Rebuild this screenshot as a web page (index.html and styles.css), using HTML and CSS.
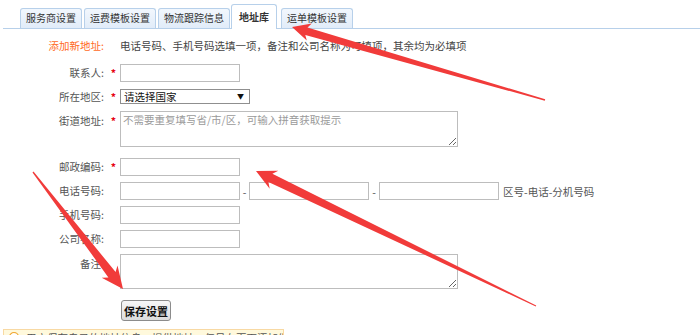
FILE: index.html
```html
<!DOCTYPE html>
<html lang="zh-CN">
<head>
<meta charset="utf-8">
<title>地址库</title>
<link rel="stylesheet" href="styles.css">
</head>
<body>
<div class="page">
  <div class="tabs">
    <div class="tab">服务商设置</div>
    <div class="tab">运费模板设置</div>
    <div class="tab">物流跟踪信息</div>
    <div class="tab active">地址库</div>
    <div class="tab">运单模板设置</div>
  </div>

  <div class="form">
    <div class="row head">
      <div class="label orange">添加新地址:</div>
      <div class="star"></div>
      <div class="desc">电话号码、手机号码选填一项，备注和公司名称为可填项，其余均为必填项</div>
    </div>
    <div class="row r-contact">
      <div class="label">联系人:</div><div class="star">*</div>
      <input class="inp" type="text">
    </div>
    <div class="row r-area">
      <div class="label">所在地区:</div><div class="star">*</div>
      <div class="select-wrap">
        <select class="sel"><option>请选择国家</option></select>
        <span class="sel-arrow">▼</span>
      </div>
    </div>
    <div class="row r-street top">
      <div class="label">街道地址:</div><div class="star">*</div>
      <textarea class="ta" placeholder="不需要重复填写省/市/区，可输入拼音获取提示"></textarea>
    </div>
    <div class="row r-zip">
      <div class="label">邮政编码:</div><div class="star">*</div>
      <input class="inp" type="text">
    </div>
    <div class="row r-std">
      <div class="label">电话号码:</div><div class="star"></div>
      <input class="inp" type="text"><span class="dash">-</span><input class="inp" type="text"><span class="dash d2">-</span><input class="inp" type="text"><span class="hint">区号-电话-分机号码</span>
    </div>
    <div class="row r-std">
      <div class="label">手机号码:</div><div class="star"></div>
      <input class="inp" type="text">
    </div>
    <div class="row r-std">
      <div class="label">公司名称:</div><div class="star"></div>
      <input class="inp" type="text">
    </div>
    <div class="row r-note top">
      <div class="label">备注:</div><div class="star"></div>
      <textarea class="ta note"></textarea>
    </div>
    <div class="row r-btn">
      <div class="label"></div><div class="star"></div>
      <button class="btn" type="button">保存设置</button>
    </div>
  </div>

  <div class="notice">
    <svg class="bulb" width="12" height="12" viewBox="0 0 12 12"><circle cx="6" cy="6" r="4.5" fill="#fff" stroke="#f0a830" stroke-width="1.2"/></svg>
    <span>用户保存自己的地址信息，提供地址，仅号在页面添加发货地址</span>
  </div>

  <svg class="marks" width="700" height="335" viewBox="0 0 700 335">
    <polygon fill="#f13b3a" points="292,27 311.8,23.4 307.5,27.4 545.2,99.3 544.8,100.7 305.3,35.0 306.8,40.6"/>
    <polygon fill="#f13b3a" points="256,171 278.3,170.7 272.4,173.8 536.2,305.5 535.8,306.5 268.4,182.0 269.7,188.7"/>
    <polygon fill="#f13b3a" points="123,289 117.5,265.5 115.6,272.0 33.5,171.6 32.5,172.4 108.4,277.4 101.7,277.7"/>
  </svg>
</div>
</body>
</html>
```
FILE: styles.css
```css
html, body {
  margin: 0;
  padding: 0;
  background: #fff;
}
body {
  font-family: "Noto Sans CJK SC", "Microsoft YaHei", sans-serif;
  font-size: 10.5px;
  color: #555;
  width: 700px;
  height: 335px;
  overflow: hidden;
}
.page {
  position: relative;
  width: 700px;
  height: 335px;
  overflow: hidden;
}
.tabs {
  display: flex;
  align-items: flex-end;
  gap: 2px;
  height: 28px;
  margin-left: 3px;
  padding-left: 17px;
  border-bottom: 1px solid #b7d0ea;
}
.tab {
  height: 20px;
  box-sizing: border-box;
  padding: 0 5px;
  line-height: 18px;
  font-size: 10px;
  color: #333;
  background: linear-gradient(#f2f7fd, #e1ecf9);
  border: 1px solid #b7d0ea;
  border-bottom: none;
  border-radius: 3px 3px 0 0;
}
.tab.active {
  height: 25px;
  margin-bottom: -1px;
  padding: 0 7px;
  line-height: 24px;
  font-weight: bold;
  background: #fff;
  margin-left: -1px;
  margin-right: 2px;
}
.form {
  display: flex;
  flex-direction: column;
}
.row {
  display: flex;
  align-items: center;
}
.row.top {
  align-items: flex-start;
}
.label {
  width: 104px;
  text-align: right;
  line-height: 20px;
  white-space: nowrap;
}
.orange {
  color: #ff6a1e;
}
.star {
  width: 16px;
  text-align: center;
  color: #e60012;
  font-weight: bold;
  line-height: 20px;
  padding-left: 3px;
  box-sizing: border-box;
}
.desc {
  color: #444;
  line-height: 16px;
  white-space: nowrap;
}
.head {
  margin-top: 9px;
  height: 16px;
}
.head .label, .head .star { line-height: 16px; }
.inp {
  width: 120px;
  height: 18px;
  box-sizing: border-box;
  border: 1px solid #bdbdbd;
  padding: 0 2px;
  margin: 0;
  font: inherit;
  outline: none;
}
.r-contact { margin-top: 10px; height: 18px; }
.r-area { margin-top: 7px; height: 15px; }
.r-street { margin-top: 7px; }
.r-zip { margin-top: 11px; height: 18px; }
.r-std { margin-top: 6px; height: 18px; }
.r-note { margin-top: 6px; }
.r-btn { margin-top: 11px; }
.select-wrap {
  position: relative;
  width: 130px;
  height: 15px;
}
.sel {
  -webkit-appearance: none;
  appearance: none;
  width: 130px;
  height: 15px;
  box-sizing: border-box;
  border: 1px solid #8f8f8f;
  border-radius: 0;
  background: #fff;
  padding: 0 0 0 3px;
  margin: 0;
  font: inherit;
  font-size: 10.5px;
  line-height: 13px;
  color: #111;
  outline: none;
}
.sel-arrow {
  position: absolute;
  right: 6px;
  top: 0;
  font-size: 7px;
  line-height: 14px;
  color: #111;
  pointer-events: none;
}
.ta {
  width: 338px;
  height: 36px;
  box-sizing: border-box;
  border: 1px solid #bdbdbd;
  margin: 0;
  padding: 1px 2px;
  font: inherit;
  line-height: 14px;
  color: #333;
  outline: none;
}
.ta::placeholder {
  color: #9a9a9a;
}
.ta.note {
  height: 35px;
}
.dash {
  width: 9px;
  text-align: center;
  color: #555;
}
.dash.d2 {
  width: 10px;
}
.hint {
  margin-left: 4px;
  color: #555;
  white-space: nowrap;
}
.btn {
  margin: 0 0 0 1px;
  width: 50px;
  height: 21px;
  box-sizing: border-box;
  padding: 0;
  font: inherit;
  font-size: 11px;
  font-weight: bold;
  color: #111;
  background: linear-gradient(#f7f7f7, #dcdcdc);
  border: 1px solid #8c8c8c;
  border-radius: 3px;
}
.notice {
  display: flex;
  align-items: flex-start;
  gap: 6px;
  margin: 8px 0 0 3px;
  width: 281px;
  height: 20px;
  box-sizing: border-box;
  padding: 1px 6px 0 4px;
  background: #fff9dc;
  border: 1px solid #f8d9a3;
  color: #555;
  line-height: 14px;
  white-space: nowrap;
  overflow: hidden;
}
.bulb {
  flex: none;
}
.marks {
  position: absolute;
  left: 0;
  top: 0;
  pointer-events: none;
}
```
